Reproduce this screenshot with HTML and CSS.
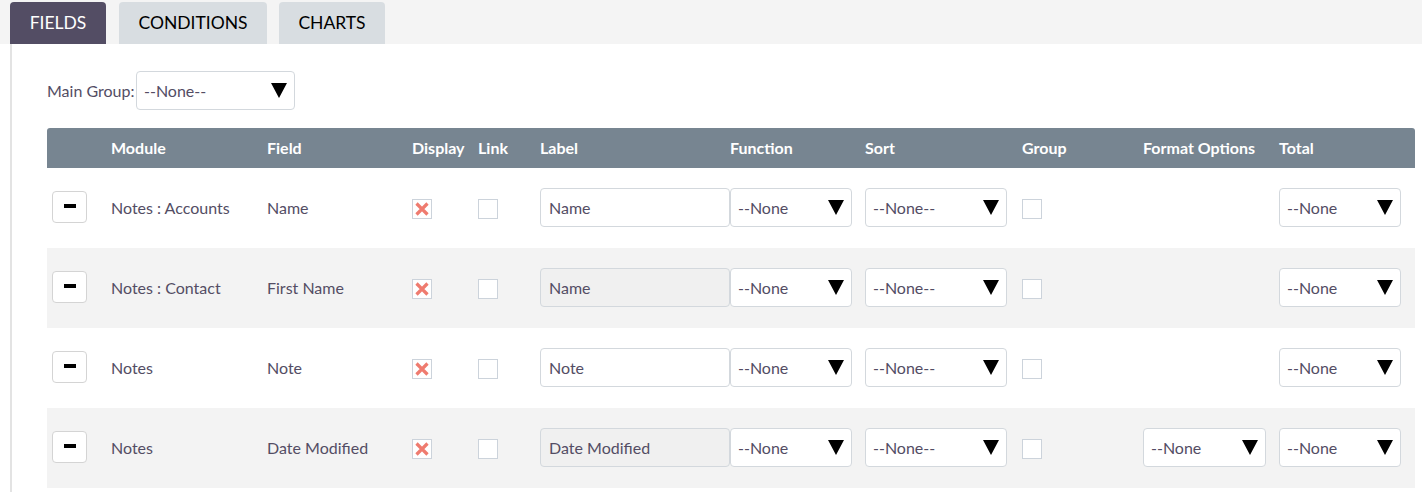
FILE: index.html
```html
<!DOCTYPE html>
<html>
<head>
<meta charset="utf-8">
<link rel="stylesheet" href="styles.css">
</head>
<body>
<div class="tabbar">
  <div class="tab active">FIELDS</div>
  <div class="tab tab-conditions">CONDITIONS</div>
  <div class="tab tab-charts">CHARTS</div>
</div>
<div class="content">
  <div class="maingroup">
    <span class="mg-label">Main Group:</span>
    <div class="select sel-main"><span>--None--</span><i class="arrow"></i></div>
  </div>
  <div class="grid">
    <div class="row head">
      <div></div>
      <div>Module</div>
      <div>Field</div>
      <div>Display</div>
      <div>Link</div>
      <div>Label</div>
      <div>Function</div>
      <div>Sort</div>
      <div>Group</div>
      <div>Format Options</div>
      <div>Total</div>
    </div>

    <div class="row">
      <div><div class="minus"><i></i></div></div>
      <div>Notes : Accounts</div>
      <div>Name</div>
      <div><span class="cb checked"><svg viewBox="0 0 18 18"><path d="M3.5 3.5 L14.5 14.5 M14.5 3.5 L3.5 14.5"/></svg></span></div>
      <div><span class="cb"></span></div>
      <div><div class="input">Name</div></div>
      <div><div class="select sel-fn"><span>--None</span><i class="arrow"></i></div></div>
      <div><div class="select sel-sort"><span>--None--</span><i class="arrow"></i></div></div>
      <div><span class="cb"></span></div>
      <div></div>
      <div><div class="select sel-fn"><span>--None</span><i class="arrow"></i></div></div>
    </div>

    <div class="row alt">
      <div><div class="minus"><i></i></div></div>
      <div>Notes : Contact</div>
      <div>First Name</div>
      <div><span class="cb checked"><svg viewBox="0 0 18 18"><path d="M3.5 3.5 L14.5 14.5 M14.5 3.5 L3.5 14.5"/></svg></span></div>
      <div><span class="cb"></span></div>
      <div><div class="input ro">Name</div></div>
      <div><div class="select sel-fn"><span>--None</span><i class="arrow"></i></div></div>
      <div><div class="select sel-sort"><span>--None--</span><i class="arrow"></i></div></div>
      <div><span class="cb"></span></div>
      <div></div>
      <div><div class="select sel-fn"><span>--None</span><i class="arrow"></i></div></div>
    </div>

    <div class="row">
      <div><div class="minus"><i></i></div></div>
      <div>Notes</div>
      <div>Note</div>
      <div><span class="cb checked"><svg viewBox="0 0 18 18"><path d="M3.5 3.5 L14.5 14.5 M14.5 3.5 L3.5 14.5"/></svg></span></div>
      <div><span class="cb"></span></div>
      <div><div class="input">Note</div></div>
      <div><div class="select sel-fn"><span>--None</span><i class="arrow"></i></div></div>
      <div><div class="select sel-sort"><span>--None--</span><i class="arrow"></i></div></div>
      <div><span class="cb"></span></div>
      <div></div>
      <div><div class="select sel-fn"><span>--None</span><i class="arrow"></i></div></div>
    </div>

    <div class="row alt">
      <div><div class="minus"><i></i></div></div>
      <div>Notes</div>
      <div>Date Modified</div>
      <div><span class="cb checked"><svg viewBox="0 0 18 18"><path d="M3.5 3.5 L14.5 14.5 M14.5 3.5 L3.5 14.5"/></svg></span></div>
      <div><span class="cb"></span></div>
      <div><div class="input ro">Date Modified</div></div>
      <div><div class="select sel-fn"><span>--None</span><i class="arrow"></i></div></div>
      <div><div class="select sel-sort"><span>--None--</span><i class="arrow"></i></div></div>
      <div><span class="cb"></span></div>
      <div><div class="select sel-fmt"><span>--None</span><i class="arrow"></i></div></div>
      <div><div class="select sel-fn"><span>--None</span><i class="arrow"></i></div></div>
    </div>
  </div>
</div>
</body>
</html>
```

FILE: styles.css
```css
html, body {
  margin: 0;
  padding: 0;
  background: #ffffff;
  font-family: Lato, "Open Sans", sans-serif;
  color: #534d64;
}

.tabbar {
  height: 44px;
  background: #f4f4f4;
  display: flex;
  align-items: flex-end;
  padding-left: 10px;
  gap: 13px;
}

.tab {
  height: 42px;
  box-sizing: border-box;
  display: flex;
  align-items: center;
  justify-content: center;
  padding-bottom: 2px;
  font-size: 17.5px;
  color: #000000;
  background: #d8dde1;
  border-radius: 4px 4px 0 0;
}

.tab.active {
  width: 96px;
  background: #534d64;
  color: #ffffff;
}

.tab-conditions {
  width: 148px;
}

.tab-charts {
  width: 106px;
  margin-left: -1px;
}

.content {
  margin-left: 10px;
  border-left: 2px solid #e3e3e3;
  padding-left: 35px;
  padding-top: 27px;
  min-height: 421px;
}

.maingroup {
  display: flex;
  align-items: center;
  height: 39px;
}

.mg-label {
  font-size: 16px;
  width: 89px;
  white-space: nowrap;
}

.select {
  box-sizing: border-box;
  height: 39px;
  background: #ffffff;
  border: 1px solid #d3d8dd;
  border-radius: 4px;
  display: flex;
  align-items: center;
  justify-content: space-between;
  padding: 0 7px 0 7px;
  font-size: 16px;
  color: #534d64;
  overflow: hidden;
  white-space: nowrap;
}

.arrow {
  flex: none;
  width: 0;
  height: 0;
  border-left: 8px solid transparent;
  border-right: 8px solid transparent;
  border-top: 15px solid #000000;
}

.sel-main {
  width: 159px;
}

.sel-fn {
  width: 122px;
}

.sel-sort {
  width: 142px;
}

.sel-fmt {
  width: 123px;
}

.grid {
  margin-top: 18px;
  width: 1368px;
}

.row {
  box-sizing: border-box;
  display: grid;
  grid-template-columns: 64px 156px 145px 66px 62px 190px 135px 157px 121px 136px 136px;
  height: 80px;
  padding-bottom: 2px;
  align-items: center;
  font-size: 16px;
}

.row > div {
  display: flex;
  align-items: center;
  white-space: nowrap;
}

.row.alt {
  background: #f3f3f3;
}

.row.head {
  height: 40px;
  background: #778591;
  color: #ffffff;
  font-weight: bold;
  font-size: 16px;
  border-radius: 3px 3px 0 0;
}

.minus {
  box-sizing: border-box;
  width: 35px;
  height: 32px;
  margin-left: 5px;
  border: 1px solid #d4d4d4;
  border-radius: 4px;
  background: #ffffff;
  display: flex;
  align-items: center;
  justify-content: center;
}

.minus i {
  width: 12px;
  height: 4px;
  background: #000000;
  margin-top: -2px;
}

.cb {
  box-sizing: border-box;
  width: 20px;
  height: 20px;
  border: 1px solid #ccd3db;
  background: #ffffff;
  margin-top: 4px;
  display: block;
}

.cb svg {
  display: block;
  width: 18px;
  height: 18px;
}

.cb svg path {
  stroke: #ef7b6f;
  stroke-width: 3.2;
  fill: none;
}

.input {
  box-sizing: border-box;
  width: 190px;
  height: 39px;
  border: 1px solid #d3d8dd;
  border-radius: 4px;
  background: #ffffff;
  display: flex;
  align-items: center;
  padding-left: 8px;
  font-size: 16px;
}

.input.ro {
  background: #f0f0f0;
}
```
